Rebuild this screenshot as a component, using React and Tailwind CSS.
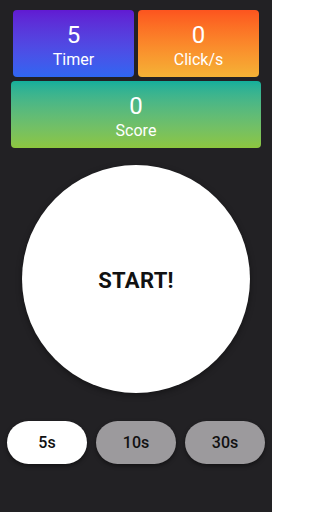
import React, { useState } from 'react';

const StatCard = ({ value, label, className }) => (
  <div className={`flex flex-col items-center justify-center pt-[4px] rounded-[4px] text-white ${className}`}>
    <span className="text-[24px] leading-[28px]">{value}</span>
    <span className="text-[16px] leading-[20px] mt-[1px]">{label}</span>
  </div>
);

const App = () => {
  const [duration, setDuration] = useState(5);

  return (
    <div
      className="w-[272px] h-[512px] bg-[#222124] flex flex-col overflow-hidden"
      style={{ fontFamily: 'Roboto, "Noto Sans", sans-serif' }}
    >
      <div className="flex gap-[4px] px-[13px] pt-[10px]">
        <StatCard
          value={duration}
          label="Timer"
          className="w-[121px] h-[67px] bg-gradient-to-b from-[#611ad2] to-[#2e66f2]"
        />
        <StatCard
          value="0"
          label="Click/s"
          className="w-[121px] h-[67px] bg-gradient-to-b from-[#fc541f] to-[#f4b236]"
        />
      </div>
      <div className="px-[11px] pt-[4px]">
        <StatCard
          value="0"
          label="Score"
          className="w-[250px] h-[67px] bg-gradient-to-b from-[#12af9b] to-[#8dc63e]"
        />
      </div>

      <div className="flex justify-center pt-[17px]">
        <button className="w-[228px] h-[228px] rounded-full bg-white flex items-center justify-center shadow-[0_2px_6px_rgba(0,0,0,0.4)]">
          <span className="text-[22px] font-bold text-[#111] tracking-[0.3px] mt-[2px]">START!</span>
        </button>
      </div>

      <div className="flex gap-[9px] px-[7px] pt-[28px]">
        {[5, 10, 30].map((s) => (
          <button
            key={s}
            onClick={() => setDuration(s)}
            className={`w-[80px] h-[43px] rounded-full text-[16px] font-medium text-[#111] shadow-[0_2px_4px_rgba(0,0,0,0.45)] ${
              duration === s ? 'bg-white' : 'bg-[#9c9a9d]'
            }`}
          >
            {s}s
          </button>
        ))}
      </div>
    </div>
  );
};

export default App;
